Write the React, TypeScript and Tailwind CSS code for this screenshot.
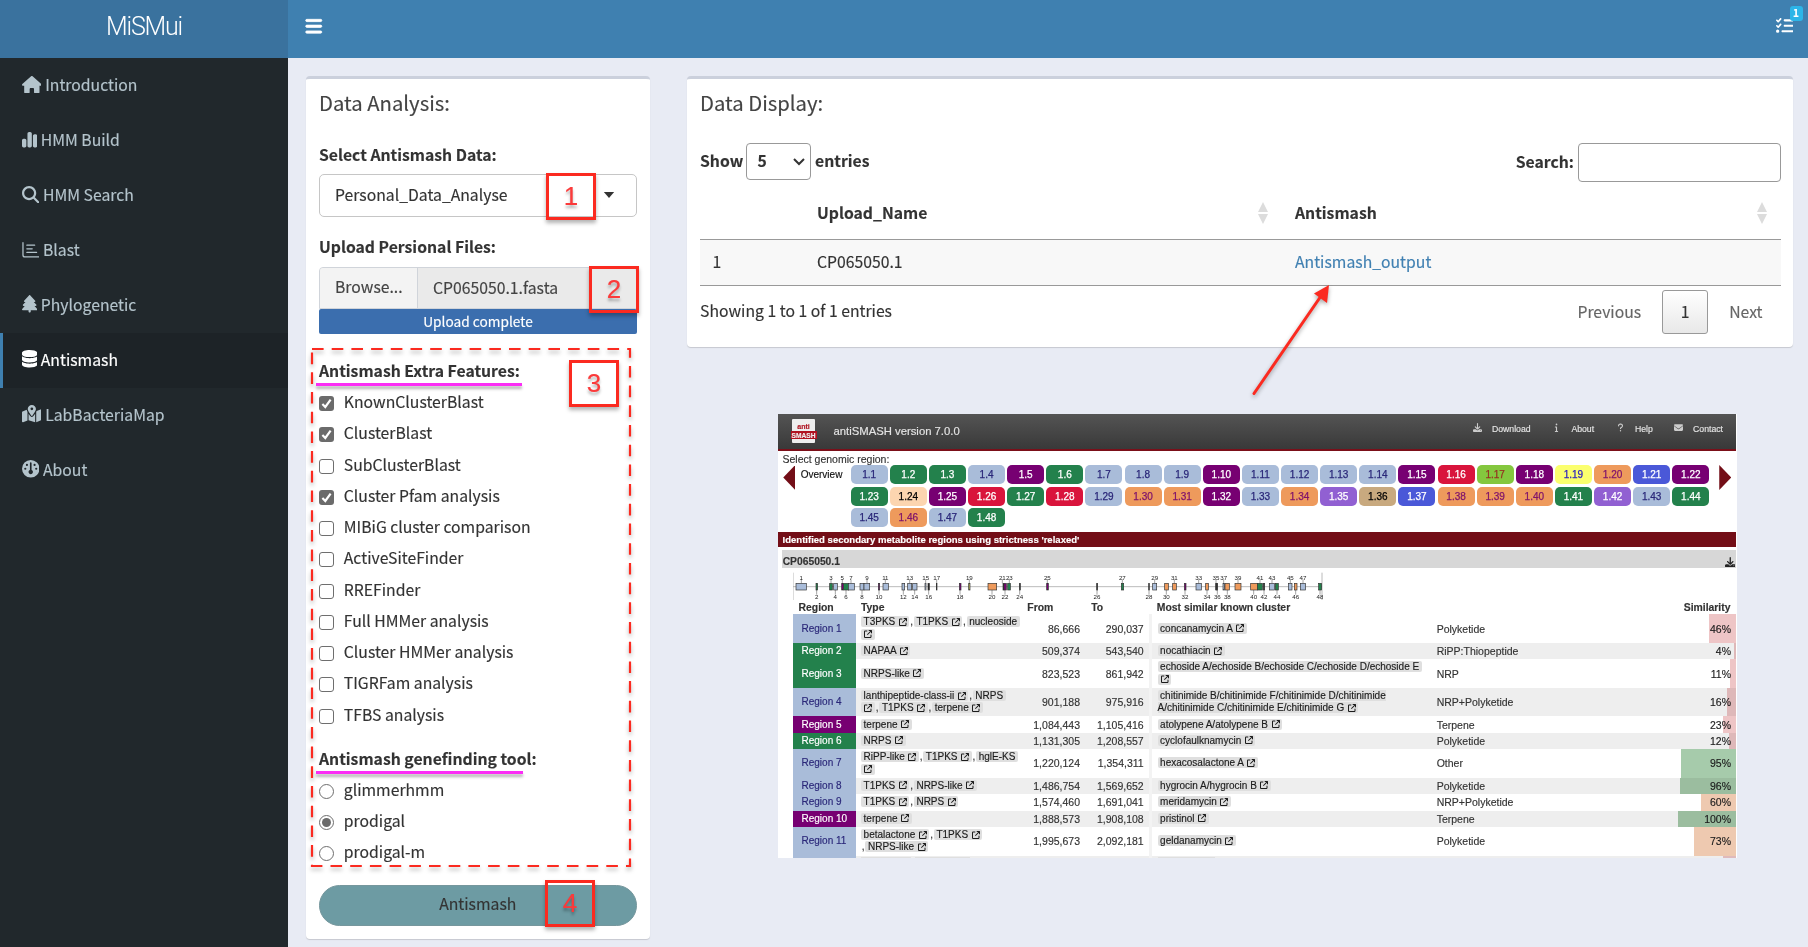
import type { ReactNode } from "react";
import {
  FaArrowUpRightFromSquare,
  FaBars,
  FaChartSimple,
  FaDatabase,
  FaDownload,
  FaEnvelope,
  FaGauge,
  FaHouse,
  FaInfo,
  FaListCheck,
  FaMagnifyingGlass,
  FaMapLocationDot,
  FaQuestion,
  FaTree,
} from "react-icons/fa6";

const barChart = (
  <svg viewBox="0 0 18 18" className="h-[17.5px] w-[17.5px]" fill="none" stroke="currentColor" strokeWidth="1.3" strokeLinecap="round">
    <path d="M1 1.8v12.6q0 2 2 2h14.2M5 4.3h8M5 8h5.5M5 11.8h10" />
  </svg>
);

const menu: { label: string; icon: ReactNode; active?: boolean }[] = [
  { label: "Introduction", icon: <FaHouse preserveAspectRatio="none" className="h-[17.5px] w-[19.7px]" /> },
  { label: "HMM Build", icon: <FaChartSimple className="h-[17.5px] w-[15.3px]" /> },
  { label: "HMM Search", icon: <FaMagnifyingGlass className="h-[17.5px] w-[17.5px]" /> },
  { label: "Blast", icon: barChart },
  { label: "Phylogenetic", icon: <FaTree className="h-[17.5px] w-[15.3px]" /> },
  { label: "Antismash", icon: <FaDatabase className="h-[17.5px] w-[15.3px]" />, active: true },
  { label: "LabBacteriaMap", icon: <FaMapLocationDot className="h-[17.5px] w-[19.7px]" /> },
  { label: "About", icon: <FaGauge className="h-[17.5px] w-[17.5px]" /> },
];

const features: [string, boolean][] = [
  ["KnownClusterBlast", true],
  ["ClusterBlast", true],
  ["SubClusterBlast", false],
  ["Cluster Pfam analysis", true],
  ["MIBiG cluster comparison", false],
  ["ActiveSiteFinder", false],
  ["RREFinder", false],
  ["Full HMMer analysis", false],
  ["Cluster HMMer analysis", false],
  ["TIGRFam analysis", false],
  ["TFBS analysis", false],
];

const tools: [string, boolean][] = [
  ["glimmerhmm", false],
  ["prodigal", true],
  ["prodigal-m", false],
];

const tone = {
  b: "bg-[#a9bcd9] text-[#2a2779]",
  g: "bg-[#23814c] text-white",
  p: "bg-[#770072] text-white",
  r: "bg-[#d9143c] text-white",
  o: "bg-[#ee9a5c] text-[#80146b]",
  l: "bg-[#84c73e] text-[#963322]",
  y: "bg-[#fbff6e] text-[#2a1fc0]",
  u: "bg-[#4a58d8] text-white",
  v: "bg-[#9160d2] text-white",
  t: "bg-[#c8a97f] text-black",
  c: "bg-[#fcd5b0] text-black",
};
type Tone = keyof typeof tone;

const regionTones = "b g g b p g b b b p b b b b p r l p y o u p g c p r g r b o o p b o v t u o o o g v b g b o b g".split(" ") as Tone[];

const chart: Record<string, string> = {
  b: "#a9bcd9",
  g: "#23814c",
  p: "#770072",
  o: "#ee9a5c",
  k: "#222222",
  y: "#b9b45a",
};

/* label centre, box left, box right, fill */
const genome: [number, number, number, string][] = [
  [95, 79, 110, "b"], [141, 139, 144, "g"], [184, 180, 188, "g"], [197, 192, 203, "b"], [218, 216, 221, "p"],
  [229, 222, 237, "g"], [244, 236, 254, "b"], [277, 271, 283, "b"], [292, 283, 300, "b"], [328, 326, 330, "p"],
  [347, 340, 356, "b"], [401, 397, 405, "b"], [420, 414, 426, "b"], [435, 429, 442, "b"], [468, 466, 469, "b"],
  [477, 475, 479, "k"], [501, 500, 502, "k"], [571, 569, 574, "p"], [599, 597, 601, "y"], [667, 655, 681, "o"],
  [698, 700, 703, "k"], [706, 703, 710, "p"], [719, 714, 722, "g"], [750, 749, 752, "k"], [833, 831, 836, "p"],
  [982, 981, 984, "k"], [1058, 1055, 1062, "g"], [1138, 1137, 1139, "k"], [1155, 1149, 1161, "b"], [1190, 1185, 1196, "o"],
  [1214, 1209, 1220, "o"], [1246, 1244, 1249, "p"], [1287, 1279, 1295, "b"], [1312, 1308, 1316, "o"], [1339, 1338, 1341, "k"],
  [1343, 1341, 1344, "k"], [1362, 1360, 1364, "b"], [1373, 1366, 1379, "o"], [1405, 1396, 1414, "o"], [1452, 1443, 1463, "o"],
  [1471, 1463, 1478, "g"], [1483, 1481, 1485, "k"], [1507, 1499, 1515, "b"], [1522, 1517, 1526, "g"], [1562, 1556, 1567, "b"],
  [1578, 1574, 1582, "o"], [1600, 1592, 1608, "b"], [1651, 1647, 1656, "g"],
];

const Ext = () => <FaArrowUpRightFromSquare className="ml-[0.8px] inline h-[8px] w-[8px] align-[-0.5px]" />;

function Chip({ children, wrap }: { children: string; wrap?: boolean }) {
  return (
    <span className="rounded-[2px] bg-[#dfdfdf] box-decoration-clone px-[2.6px] text-[#1c1c1c]">
      {children}
      {wrap ? <br /> : " "}
      <Ext />
    </span>
  );
}
const Comma = () => <span className="px-[0.8px]">,</span>;

type Row = { tone: Tone; type: ReactNode; from: string; to: string; known: ReactNode; kind: string; pct: number; tall?: boolean };
const rows: Row[] = [
  { tone: "b", tall: true, type: <><Chip>T3PKS</Chip><Comma /><Chip>T1PKS</Chip><Comma /><Chip wrap>nucleoside</Chip></>, from: "86,666", to: "290,037", known: <Chip>concanamycin A</Chip>, kind: "Polyketide", pct: 46 },
  { tone: "g", type: <Chip>NAPAA</Chip>, from: "509,374", to: "543,540", known: <Chip>nocathiacin</Chip>, kind: "RiPP:Thiopeptide", pct: 4 },
  { tone: "g", tall: true, type: <Chip>NRPS-like</Chip>, from: "823,523", to: "861,942", known: <Chip wrap>echoside A/echoside B/echoside C/echoside D/echoside E</Chip>, kind: "NRP", pct: 11 },
  { tone: "b", tall: true, type: <><Chip>lanthipeptide-class-ii</Chip><Comma /><Chip wrap>NRPS</Chip><Comma /><Chip>T1PKS</Chip><Comma /><Chip>terpene</Chip></>, from: "901,188", to: "975,916", known: <span className="rounded-[2px] bg-[#dfdfdf] px-[2.6px] text-[#1c1c1c]">chitinimide B/chitinimide F/chitinimide D/chitinimide<br />A/chitinimide C/chitinimide E/chitinimide G <Ext /></span>, kind: "NRP+Polyketide", pct: 16 },
  { tone: "p", type: <Chip>terpene</Chip>, from: "1,084,443", to: "1,105,416", known: <Chip>atolypene A/atolypene B</Chip>, kind: "Terpene", pct: 23 },
  { tone: "g", type: <Chip>NRPS</Chip>, from: "1,131,305", to: "1,208,557", known: <Chip>cyclofaulknamycin</Chip>, kind: "Polyketide", pct: 12 },
  { tone: "b", tall: true, type: <><Chip>RiPP-like</Chip><Comma /><Chip>T1PKS</Chip><Comma /><Chip wrap>hglE-KS</Chip></>, from: "1,220,124", to: "1,354,311", known: <Chip>hexacosalactone A</Chip>, kind: "Other", pct: 95 },
  { tone: "b", type: <><Chip>T1PKS</Chip><Comma /><Chip>NRPS-like</Chip></>, from: "1,486,754", to: "1,569,652", known: <Chip>hygrocin A/hygrocin B</Chip>, kind: "Polyketide", pct: 96 },
  { tone: "b", type: <><Chip>T1PKS</Chip><Comma /><Chip>NRPS</Chip></>, from: "1,574,460", to: "1,691,041", known: <Chip>meridamycin</Chip>, kind: "NRP+Polyketide", pct: 60 },
  { tone: "p", type: <Chip>terpene</Chip>, from: "1,888,573", to: "1,908,108", known: <Chip>pristinol</Chip>, kind: "Terpene", pct: 100 },
  { tone: "b", tall: true, type: <><Chip>betalactone</Chip><Comma /><Chip>T1PKS</Chip><br /><Comma /><Chip>NRPS-like</Chip></>, from: "1,995,673", to: "2,092,181", known: <Chip>geldanamycin</Chip>, kind: "Polyketide", pct: 73 },
];

const cols = "grid grid-cols-[62.5px_157px_67.5px_69px_3px_284.7px_1fr]";

function Marker({ n, className }: { n: number; className: string }) {
  return (
    <div className={"absolute flex items-center justify-center border-[3px] border-[#fb2a20] pb-px font-['Liberation_Sans'] text-[26px] leading-none text-[#fb3a3a] shadow-[0_3px_4px_rgba(0,0,0,0.3)] [text-shadow:0_3px_3px_rgba(0,0,0,0.3)] " + className}>
      {n}
    </div>
  );
}

function Check({ label, on, radio }: { label: string; on: boolean; radio?: boolean }) {
  return (
    <div className="flex h-[31.25px] items-center gap-[9.8px]">
      {radio ? (
        <span className="flex h-[15px] w-[15px] items-center justify-center rounded-full border border-[#6e6e6e] bg-white">
          {on && <span className="h-[9px] w-[9px] rounded-full bg-[#6b6b6b]" />}
        </span>
      ) : on ? (
        <span className="flex h-[15px] w-[15px] items-center justify-center rounded-[3px] bg-[#6b6b6b]">
          <svg viewBox="0 0 12 12" className="h-[13px] w-[13px]" fill="none" stroke="white" strokeWidth="2">
            <path d="M2.2 6.4 4.9 9.2 9.8 2.4" />
          </svg>
        </span>
      ) : (
        <span className="h-[15px] w-[15px] rounded-[3px] border border-[#6e6e6e] bg-white" />
      )}
      <span className="-mt-[3px]">{label}</span>
    </div>
  );
}

function SortIcon() {
  return (
    <svg viewBox="0 0 10 22" className="h-[22px] w-[10px]" fill="#dcdcdc">
      <path d="M5 0l5 10H0zM5 22l5-10H0z" />
    </svg>
  );
}

function Report() {
  return (
    <div className="mt-[67px] ml-[91px] h-[443.7px] w-[959px] overflow-hidden bg-white pr-px font-['Liberation_Sans',sans-serif] text-[10px] leading-[12.1px] text-[#333] [-webkit-text-stroke:0.15px_currentColor]">
      <div className="flex h-[37px] border-b-[2.5px] border-[#7b0f19] bg-linear-to-b from-[#545454] to-[#393939] text-[#e4e4e4]">
        <div className="mt-[4.5px] ml-[14px] flex h-[24.5px] w-[23px] flex-col items-center rounded-[1px] bg-[#eeeeee]">
          <span className="mt-[3px] h-[9px] text-[7px] leading-[9px] font-bold text-[#b01824]">anti</span>
          <span className="h-[8.5px] w-[26px] bg-[#b01220] text-center text-[6.6px] leading-[9px] font-bold text-[#eee]">SMASH</span>
        </div>
        <span className="mt-[9.5px] ml-[18.5px] text-[11.3px] leading-[14px]">antiSMASH version 7.0.0</span>
        <div className="mt-[9px] mr-[13px] ml-auto flex text-[8.7px] leading-[12px]">
          <FaDownload className="mr-[9.5px] text-[9px] text-[#ccc]" />
          <span>Download</span>
          <FaInfo className="mr-[10px] ml-[21.8px] text-[9px] text-[#ccc]" />
          <span>About</span>
          <FaQuestion className="mr-[10px] ml-[21.8px] text-[9px] text-[#ccc]" />
          <span>Help</span>
          <FaEnvelope className="mr-[10px] ml-[21.3px] text-[9px] text-[#ccc]" />
          <span>Contact</span>
        </div>
      </div>
      <div className="h-[14.2px] pt-[1.5px] pl-[4.5px] text-[10.5px]">Select genomic region:</div>
      <div className="flex h-[66.3px]">
        <svg viewBox="0 0 12 25" className="ml-[4.7px] h-[25px] w-[12.5px]" fill="#730e17">
          <path d="M12 0v25L0 12.5z" />
        </svg>
        <span className="mt-[4px] ml-[5.5px] w-[50px] text-[#111]">Overview</span>
        <div className="grid h-[61.3px] w-[862px] grid-cols-[repeat(22,37px)] grid-rows-[repeat(3,19px)] gap-x-[2.13px] gap-y-[2.15px]">
          {regionTones.map((t, i) => (
            <span key={i} className={"rounded-[5px] text-center leading-[19.5px] [-webkit-text-stroke:0.25px_currentColor] " + tone[t]}>
              1.{i + 1}
            </span>
          ))}
        </div>
        <svg viewBox="0 0 12 25" className="ml-[6px] h-[25px] w-[12.5px]" fill="#730e17">
          <path d="M0 0v25l12-12.5z" />
        </svg>
      </div>
      <div className="h-[15.3px] bg-[#730e17] pl-[4.5px] text-[9.55px] leading-[15.5px] font-bold text-white">
        Identified secondary metabolite regions using strictness &#39;relaxed&#39;
      </div>
      <div className="mt-[3.4px] ml-[4px] flex h-[18px] items-center justify-between bg-[#d7d7d7] pr-px">
        <span className="mt-[6px] ml-[0.7px] text-[10.3px] font-bold">CP065050.1</span>
        <FaDownload className="mt-[5px] text-[10.5px] text-[#222]" />
      </div>
      <svg viewBox="70 0 1590 99" className="mt-[0.8px] ml-[15.3px] block h-[33px] w-[530px]">
        <path d="M70 11v82M1657 11v82M70 53h1587" stroke="#999" strokeWidth="2" fill="none" />
        {genome.map(([c, l, r, f], i) => (
          <g key={i}>
            <path d={i % 2 ? `M${c} 63v14` : `M${c} 31v12`} stroke="#777" strokeWidth="2" />
            <rect x={l} y="43" width={r - l} height="20" fill={chart[f]} stroke="#333" strokeWidth="2" />
            <text x={c} y={i % 2 ? 90 : 32} textAnchor="middle" fontSize="18.5" fill="#222">
              {i + 1}
            </text>
          </g>
        ))}
      </svg>
      <div className="-mt-px ml-[15px] flex h-[13px] items-center text-[10.4px] font-bold">
        <span className="w-[63px] pl-[5.5px]">Region</span>
        <span className="w-[171.3px] pl-[5px]">Type</span>
        <span className="w-[64px]">From</span>
        <span className="w-[65.5px]">To</span>
        <span>Most similar known cluster</span>
        <span className="mr-[5.5px] ml-auto">Similarity</span>
      </div>
      <div className="ml-[15px]">
        {rows.map((r, i) => (
          <div key={i} className={cols + " items-stretch " + (r.tall ? "h-[28.6px]" : "h-[16.4px]") + (i % 2 ? " bg-[#eeeeee]" : " bg-white")}>
            <div className={"flex items-center pl-[8.5px] " + tone[r.tone]}>Region {i + 1}</div>
            <div className="flex items-center pl-[5.5px] whitespace-nowrap">
              <div>{r.type}</div>
            </div>
            <div className="flex items-center justify-end text-[10.5px]">{r.from}</div>
            <div className="flex items-center justify-end pr-[5.3px] text-[10.5px]">{r.to}</div>
            <div className="bg-[#f3f3f3]" />
            <div className="flex items-center pl-[5.5px] whitespace-nowrap">
              <div>{r.known}</div>
            </div>
            <div className="flex items-stretch justify-between text-[10.5px]">
              <span className="self-center">{r.kind}</span>
              <div
                className={"flex items-center justify-end mix-blend-multiply " + (r.pct > 90 ? "bg-[#a6cbab]" : r.pct > 50 ? "bg-[#eec9b0]" : "bg-[#eec5c6]")}
                style={{ width: r.pct * 0.58 }}
              >
                <span className="pr-[5px] text-[#1c1c1c]">{r.pct}%</span>
              </div>
            </div>
          </div>
        ))}
        <div className={cols + " h-[4px] bg-[#eeeeee]"}>
          <div className="bg-[#a9bcd9]" />
          <div className="flex gap-[4px] pt-px pl-[5.5px]">
            <div className="w-[50px] bg-[#dfdfdf]" />
            <div className="w-[55px] bg-[#dfdfdf]" />
          </div>
          <div />
          <div />
          <div className="bg-[#f3f3f3]" />
          <div className="pt-px pl-[5.5px]">
            <div className="h-full w-[57px] bg-[#dfdfdf]" />
          </div>
          <div className="ml-auto w-[13px] bg-[#dfbabb]" />
        </div>
      </div>
    </div>
  );
}

export default function App() {
  return (
    <div className="relative flex h-[947px] w-[1808px] flex-col overflow-hidden bg-[#e8ebf4] font-['Noto_Sans_CJK_SC',sans-serif] text-[15.75px] leading-[22px] text-[#333] [-webkit-text-stroke:0.15px_currentColor]">
      <header className="flex h-[58px] shrink-0 bg-[#3f80b0] text-white">
        <div className="flex w-[288px] items-center justify-center bg-[#3a729e] pb-[5px] font-['Roboto',sans-serif] text-[25px] font-light tracking-[-1.2px] [-webkit-text-stroke:0px]">MiSMui</div>
        <FaBars className="mt-[17px] ml-[17px] h-[18.5px] w-[17.5px]" strokeWidth="20" stroke="currentColor" />
        <div className="relative mt-[17px] mr-[15px] ml-auto">
          <FaListCheck className="h-[17.5px] w-[17.5px]" />
          <span className="absolute top-[-11px] left-[14px] flex h-[15px] w-[13px] items-center justify-center rounded-[3px] bg-[#2cb5e8] pb-px text-[10px] font-bold">1</span>
        </div>
      </header>
      <div className="flex min-h-0 flex-1">
        <nav className="w-[288px] shrink-0 bg-[#21282c] text-[#b4c4cc]">
          {menu.map((m) => (
            <div
              key={m.label}
              className={
                "flex h-[54.95px] items-center gap-[4px] border-l-[3px] pb-[2px] pl-[18.5px] " +
                (m.active ? "border-[#3f80b0] bg-[#1d2327] text-white" : "border-transparent")
              }
            >
              {m.icon}
              <span className="mt-[2px]">{m.label}</span>
            </div>
          ))}
        </nav>
        <main className="flex min-w-0 flex-1 items-start gap-[37px] pt-[18px] pl-[18px]">
          <section className="h-[863px] w-[344px] shrink-0 rounded-[4px] border-t-[3px] border-[#cbd0dc] bg-white px-[13px] shadow-[0_1px_1px_rgba(0,0,0,0.15)]">
            <h3 className="mt-[8px] h-[30px] text-[20.3px] leading-[30px] text-[#444]">Data Analysis:</h3>
            <div className="mt-[27px] h-[22px] font-bold">Select Antismash Data:</div>
            <div className="mt-[8px] flex h-[43px] w-[318px] items-center justify-between rounded-[5px] border border-[#c6c6c6] pr-[21px] pl-[15px]">
              <span className="-mt-[2px]">Personal_Data_Analyse</span>
              <svg viewBox="0 0 12 7" className="-mt-[2px] h-[6px] w-[12px]" fill="#333">
                <path d="M0 0h12L6 7z" />
              </svg>
            </div>
            <div className="mt-[19px] h-[22px] font-bold">Upload Persional Files:</div>
            <div className="mt-[9px] flex h-[42px] w-[318px] items-center overflow-hidden rounded-t-[4px] border border-[#d0d4da] bg-[#eaeaea] text-[#444]">
              <div className="flex h-full w-[98px] items-center border-r border-[#d0d4da] bg-[#f3f3f3] pb-[3px] pl-[15px]">Browse...</div>
              <span className="pl-[15px]">CP065050.1.fasta</span>
            </div>
            <div className="h-[25px] w-[318px] rounded-[2px] bg-[#3b6eae] text-center text-[13.7px] leading-[24px] text-white">Upload complete</div>
            <div className="mt-[26px] h-[22px] font-bold">Antismash Extra Features:</div>
            <div className="mt-[6px]">
              {features.map(([label, on]) => (
                <Check key={label} label={label} on={on} />
              ))}
            </div>
            <div className="mt-[16px] h-[22px] font-bold">Antismash genefinding tool:</div>
            <div className="mt-[5.7px]">
              {tools.map(([label, on]) => (
                <Check key={label} label={label} on={on} radio />
              ))}
            </div>
            <div className="mt-[15.6px] flex h-[41px] w-[317.5px] items-center justify-center rounded-full border border-[#76979d] bg-[#6d9ba3] pb-[2px]">Antismash</div>
          </section>
          <div className="flex flex-col">
            <section className="h-[271.3px] w-[1106px] rounded-[4px] border-t-[3px] border-[#cbd0dc] bg-white px-[13px] shadow-[0_1px_1px_rgba(0,0,0,0.15)]">
              <h3 className="mt-[8px] h-[30px] text-[20.3px] leading-[30px] text-[#444]">Data Display:</h3>
              <div className="mt-[26px] flex h-[39px] w-[1081px] items-start font-bold">
                <span className="mt-[7px] w-[46px]">Show</span>
                <div className="flex h-[37px] w-[65px] items-center justify-between rounded-[4px] border border-[#999] pr-[5px] pl-[10.5px]">
                  <span className="-mt-[2px]">5</span>
                  <svg viewBox="0 0 12 8" className="h-[8px] w-[12px]" fill="none" stroke="#333" strokeWidth="2">
                    <path d="M1 1l5 5 5-5" />
                  </svg>
                </div>
                <span className="mt-[7px] ml-[4px]">entries</span>
                <span className="mt-[8px] mr-[4px] ml-auto">Search:</span>
                <div className="h-[39px] w-[203px] rounded-[4px] border border-[#999]" />
              </div>
              <div className="mt-px grid h-[57px] w-[1081px] grid-cols-[117px_478px_1fr] items-center border-b border-[#999] pt-[4px] font-bold">
                <span />
                <span className="flex items-center justify-between pr-[27px]">
                  <span className="-mt-px">Upload_Name</span>
                  <SortIcon />
                </span>
                <span className="flex items-center justify-between pr-[14.5px]">
                  <span className="-mt-px">Antismash</span>
                  <SortIcon />
                </span>
              </div>
              <div className="grid h-[46px] w-[1081px] grid-cols-[117px_478px_1fr] items-center border-b border-[#999] bg-[#f8f8f8] pb-[2px]">
                <span className="pl-[12.5px]">1</span>
                <span>CP065050.1</span>
                <span className="text-[#4080b2]">Antismash_output</span>
              </div>
              <div className="flex h-[52px] w-[1081px] items-center">
                <span className="-mt-[2px]">Showing 1 to 1 of 1 entries</span>
                <span className="-mt-px ml-auto text-[#666]">Previous</span>
                <span className="ml-[21px] flex h-[44px] w-[46px] items-center justify-center rounded-[3px] border border-[#999] bg-linear-to-b from-white to-[#e8e8e8] pb-px">1</span>
                <span className="-mt-px mr-[18.5px] ml-[21px] text-[#666]">Next</span>
              </div>
            </section>
            <Report />
          </div>
        </main>
      </div>

      <Marker n={1} className="top-[173px] left-[546px] h-[47px] w-[50px]" />
      <Marker n={2} className="top-[265.5px] left-[589px] h-[47px] w-[50px]" />
      <Marker n={3} className="top-[359.5px] left-[569px] h-[47px] w-[50px]" />
      <Marker n={4} className="top-[880px] left-[545px] h-[47px] w-[50px]" />
      <div className="absolute top-[383px] left-[316px] h-[3px] w-[206px] bg-[#fb2df5] shadow-[0_3px_3px_rgba(0,0,0,0.3)]" />
      <div className="absolute top-[771px] left-[316px] h-[3px] w-[207px] bg-[#fb2df5] shadow-[0_3px_3px_rgba(0,0,0,0.3)]" />
      <svg viewBox="0 0 324 525" className="absolute top-[347px] left-[310px] h-[525px] w-[324px] drop-shadow-[0_3px_2px_rgba(0,0,0,0.3)]" fill="none" stroke="#fb2a20" strokeWidth="2.2">
        <path d="M2 2h318v517H2z" strokeDasharray="11.6 8.1" />
      </svg>
      <svg viewBox="0 0 90 120" className="absolute top-[280px] left-[1248px] h-[120px] w-[90px] drop-shadow-[0_2px_2px_rgba(0,0,0,0.35)]">
        <path d="M6 113.500L73 16" stroke="#fb2a20" strokeWidth="3" strokeLinecap="round" />
        <path d="M81 5L79 23L66 13.500z" fill="#fb2a20" />
      </svg>
    </div>
  );
}
